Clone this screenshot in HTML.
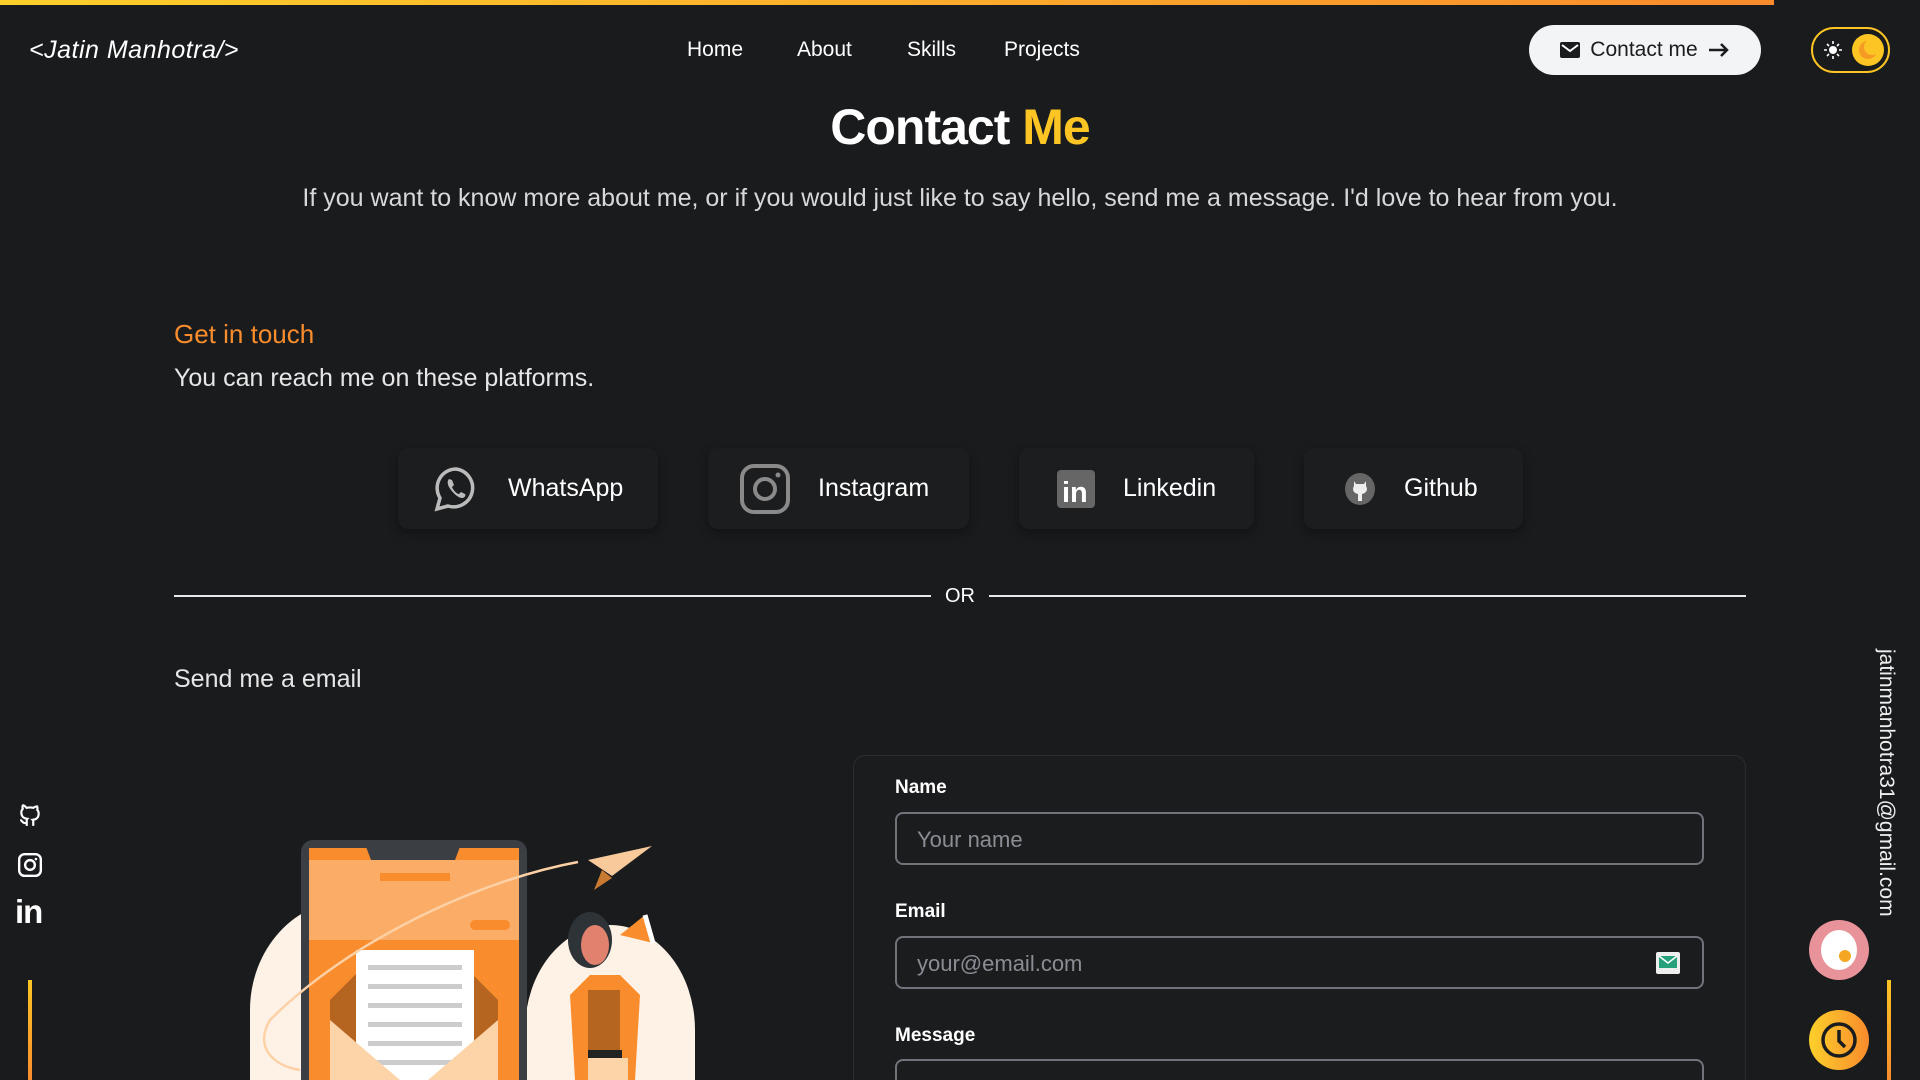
<!DOCTYPE html>
<html style="width:1920px;height:1080px;overflow:hidden"><head><meta charset="utf-8"><style>
*{margin:0;padding:0;box-sizing:border-box}
body{width:1920px;height:1080px;overflow:hidden;background:#1a1b1d;color:#f1f1f1;font-family:"Liberation Sans",sans-serif;position:relative}
.abs{position:absolute}
.topbar{left:0;top:0;width:1774px;height:5px;background:linear-gradient(90deg,#fdd02b,#f98b2c)}
.logo{left:29px;top:36px;font-size:25px;font-style:italic;color:#fff;letter-spacing:0.5px}
.nav a{position:absolute;top:38px;font-size:21px;color:#fff;text-decoration:none}
.cbtn{left:1529px;top:25px;width:232px;height:50px;border-radius:25px;background:#f3f4f6;color:#1b1c1e;font-size:21px;display:flex;align-items:center;justify-content:center;gap:10px}
.tog{left:1811px;top:27px;width:79px;height:46px;border:2px solid #fcc524;border-radius:24px}
h1{position:absolute;left:0;width:1920px;text-align:center;top:98px;font-size:50px;font-weight:bold;color:#fff;letter-spacing:-1px}
h1 span{color:#fcc524}
.intro{left:0;width:1920px;text-align:center;top:184px;font-size:25px;color:#d8d8dc}
.git{left:174px;top:319px;font-size:26px;color:#f98d2d}
.reach{left:174px;top:364px;font-size:25px;color:#e6e6e6}
.card{position:absolute;top:448px;height:81px;background:#1c1d1f;border-radius:10px;box-shadow:0 4px 10px rgba(0,0,0,.35);display:flex;align-items:center;font-size:25px;color:#fff}
.card svg{margin-right:28px}
.line{height:2px;background:#e8e8e8;top:595px}
.or{left:940px;top:585px;font-size:20px;color:#fff;width:40px;text-align:center}
.send{left:174px;top:665px;font-size:25px;color:#e6e6e6}
.form{left:853px;top:755px;width:893px;height:325px;border:1px solid #2c2d30;border-bottom:none;border-radius:12px 12px 0 0;background:#1b1c1e}
.lbl{position:absolute;left:895px;font-size:19px;font-weight:bold;color:#fff}
.inp{position:absolute;left:895px;width:809px;height:53px;border:2px solid #70737a;border-radius:8px;font-size:22px;color:#8a8d93;padding:13px 20px}
.vl{width:4px;background:linear-gradient(#fcc524,#f98d2d)}
</style></head><body>
<div class="abs topbar"></div>
<div class="abs logo">&lt;Jatin Manhotra/&gt;</div>
<div class="nav"><a style="left:687px">Home</a><a style="left:797px">About</a><a style="left:907px">Skills</a><a style="left:1004px">Projects</a></div>
<div class="abs cbtn"><svg width="20" height="16" viewBox="0 0 20 16"><rect width="20" height="16" rx="2" fill="#1b1c1e"/><path d="M2 3l8 6 8-6" stroke="#fff" stroke-width="2" fill="none"/></svg>Contact me<svg width="22" height="14" viewBox="0 0 22 14"><path d="M1 7h18M13 1l6 6-6 6" stroke="#1b1c1e" stroke-width="2.5" fill="none"/></svg></div>
<div class="abs tog"><svg width="75" height="42" viewBox="0 0 75 42" style="position:absolute;left:0;top:0"><circle cx="20" cy="21" r="4" fill="#fff"/><g stroke="#fff" stroke-width="1.6"><path d="M20 12v3M20 27v3M11 21h3M26 21h3M14 15l2 2M24 25l2 2M14 27l2-2M24 17l2-2"/></g><circle cx="55" cy="21" r="16" fill="#fcc524"/><circle cx="55" cy="21" r="9" fill="#f59a22"/><circle cx="59" cy="18" r="8" fill="#fcc524"/></svg></div>
<h1>Contact <span>Me</span></h1>
<div class="abs intro">If you want to know more about me, or if you would just like to say hello, send me a message. I'd love to hear from you.</div>
<div class="abs git">Get in touch</div>
<div class="abs reach">You can reach me on these platforms.</div>
<div class="card" style="left:398px;width:260px;padding-left:34px"><svg width="48" height="48" viewBox="0 0 48 48"><path d="M24 4a19 19 0 0 0-16 29L5 44l11-3A19 19 0 1 0 24 4z" fill="none" stroke="#bbb" stroke-width="3.5"/><path d="M17 14c-2 2-2 6 2 11s8 8 11 8c3 0 4-3 3-4l-4-2-2 2c-2 0-6-4-7-7l2-2-2-5z" fill="#bbb"/></svg>WhatsApp</div>
<div class="card" style="left:708px;width:261px;padding-left:32px"><svg width="50" height="50" viewBox="0 0 50 50"><rect x="2" y="2" width="46" height="46" rx="12" fill="none" stroke="#8a8a8a" stroke-width="4"/><circle cx="25" cy="25" r="10" fill="none" stroke="#8a8a8a" stroke-width="4"/><circle cx="38" cy="11" r="2.5" fill="#8a8a8a"/></svg>Instagram</div>
<div class="card" style="left:1019px;width:235px;padding-left:38px"><svg width="38" height="38" viewBox="0 0 38 38"><rect width="38" height="38" rx="4" fill="#666"/><text x="5" y="32" font-family="Liberation Sans" font-weight="bold" font-size="29" fill="#fff">in</text></svg>Linkedin</div>
<div class="card" style="left:1304px;width:219px;padding-left:40px"><svg width="32" height="34" viewBox="0 0 32 34"><ellipse cx="16" cy="17" rx="15" ry="16" fill="#666"/><path d="M10 9l2 3h8l2-3v5c2 3 1 7-4 8v7h-4v-7c-5-1-6-5-4-8z" fill="#eee"/></svg>Github</div>
<div class="abs line" style="left:174px;width:757px"></div>
<div class="abs line" style="left:989px;width:757px"></div>
<div class="abs or">OR</div>
<div class="abs send">Send me a email</div>
<div class="abs form"></div>
<div class="lbl" style="top:777px">Name</div>
<div class="inp" style="top:812px">Your name</div>
<div class="lbl" style="top:901px">Email</div>
<div class="inp" style="top:936px">your@email.com<svg width="24" height="22" viewBox="0 0 24 22" style="position:absolute;right:22px;top:14px"><rect width="24" height="22" rx="2" fill="#eee"/><rect x="3" y="4" width="18" height="12" fill="#26a17b"/><path d="M3 4l9 7 9-7" stroke="#fff" stroke-width="1.5" fill="none"/></svg></div>
<div class="lbl" style="top:1025px">Message</div>
<div class="abs" style="left:895px;top:1059px;width:809px;height:21px;border:2px solid #70737a;border-bottom:none;border-radius:8px 8px 0 0"></div>
<svg class="abs" style="left:230px;top:820px" width="500" height="260" viewBox="0 0 500 260">
<path d="M20 260V190A100 110 0 0 1 220 190V260Z" fill="#fef2e6"/>
<path d="M295 260V210A85 105 0 0 1 465 210V260Z" fill="#fef2e6"/>
<path d="M71 260V32a12 12 0 0 1 12-12h202a12 12 0 0 1 12 12V260Z" fill="#3b3f44"/>
<rect x="79" y="28" width="210" height="232" fill="#f98d2d"/>
<rect x="79" y="40" width="210" height="80" fill="#fbac66"/>
<path d="M135 24h96l-6 16h-84z" fill="#3b3f44"/>
<rect x="150" y="53" width="70" height="8" fill="#f98d2d"/>
<rect x="240" y="100" width="40" height="10" rx="5" fill="#f98d2d"/>
<path d="M100 180l30-30v110h-30zM268 180l-30-30v110h30z" fill="#b5651f"/>
<rect x="126" y="130" width="118" height="130" fill="#fff"/>
<g fill="#ccc"><rect x="138" y="145" width="94" height="5"/><rect x="138" y="164" width="94" height="5"/><rect x="138" y="183" width="94" height="5"/><rect x="138" y="202" width="94" height="5"/><rect x="138" y="221" width="94" height="5"/><rect x="138" y="240" width="94" height="5"/></g>
<path d="M100 200l70 60h-70zM268 200l-70 60h70z" fill="#fdd3a8"/>
<path d="M348 42C250 60 120 120 40 200c-15 25 0 45 30 50" stroke="#fdd0a5" stroke-width="2.5" fill="none"/>
<path d="M358 40l64-14-40 30z" fill="#f8c99b"/><path d="M372 50l-8 20 18-12z" fill="#c97a32"/>
<ellipse cx="360" cy="120" rx="22" ry="28" fill="#2e3338"/>
<ellipse cx="365" cy="125" rx="14" ry="20" fill="#e0826e"/>
<path d="M390 115l25-20 8 28z" fill="#f98d2d"/><path d="M415 95l8 28" stroke="#fff" stroke-width="5"/>
<path d="M340 175l20-20h30l20 20-5 85h-60z" fill="#f98d2d"/>
<rect x="358" y="170" width="32" height="60" fill="#b5651f"/>
<rect x="358" y="230" width="34" height="8" fill="#222"/>
<rect x="358" y="238" width="40" height="22" fill="#fdd3a8"/>
</svg>
<svg class="abs" style="left:17px;top:802px" width="26" height="26" viewBox="0 0 24 24"><path d="M9 19c-4 1.5-4-2-6-2.5M15 22v-3.5c0-1 .1-1.4-.5-2 2.8-.3 5.5-1.4 5.5-6a4.6 4.6 0 0 0-1.3-3.2 4.2 4.2 0 0 0-.1-3.2s-1.1-.3-3.5 1.3a12 12 0 0 0-6.2 0C6.5 2.8 5.4 3.1 5.4 3.1a4.2 4.2 0 0 0-.1 3.2A4.6 4.6 0 0 0 4 9.5c0 4.6 2.7 5.7 5.5 6-.6.6-.6 1.2-.5 2V22" fill="none" stroke="#fff" stroke-width="2"/></svg>
<svg class="abs" style="left:17px;top:852px" width="26" height="26" viewBox="0 0 24 24"><rect x="2" y="2" width="20" height="20" rx="5" fill="none" stroke="#fff" stroke-width="2.2"/><circle cx="12" cy="12" r="4.5" fill="none" stroke="#fff" stroke-width="2.2"/><circle cx="17.5" cy="6.5" r="1.2" fill="#fff"/></svg>
<div class="abs" style="left:15px;top:893px;font-size:33px;font-weight:bold;color:#fff;letter-spacing:-1px">in</div>
<div class="abs vl" style="left:28px;top:980px;height:100px"></div>
<div class="abs" style="left:1874px;top:649px;writing-mode:vertical-rl;font-size:21px;color:#eee">jatinmanhotra31@gmail.com</div>
<div class="abs vl" style="left:1887px;top:980px;height:100px"></div>
<div class="abs" style="left:1809px;top:920px;width:60px;height:60px;border-radius:50%;background:#e8939a;overflow:hidden"><div class="abs" style="left:12px;top:10px;width:36px;height:40px;border-radius:50%;background:#fff"></div><div class="abs" style="left:30px;top:30px;width:12px;height:12px;border-radius:50%;background:#f5a623"></div></div>
<div class="abs" style="left:1809px;top:1010px;width:60px;height:60px;border-radius:50%;background:linear-gradient(90deg,#fdd02b,#f98b2c)"><svg width="60" height="60" viewBox="0 0 60 60"><circle cx="30" cy="30" r="16" fill="none" stroke="#1b1c1e" stroke-width="3.5"/><path d="M30 20v11l6 6" stroke="#1b1c1e" stroke-width="3.5" fill="none"/></svg></div>
</body></html>
